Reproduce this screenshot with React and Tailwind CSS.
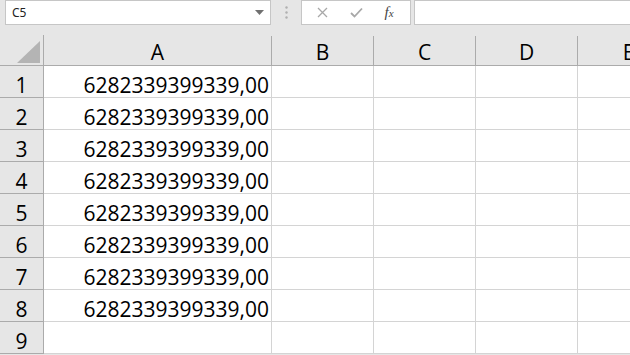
import React from "react";

const cols = ["A", "B", "C", "D", "E"];
const rows = [1, 2, 3, 4, 5, 6, 7, 8, 9];
const value = "6282339399339,00";

export default function App() {
  return (
    <div
      className="w-[630px] h-[355px] overflow-hidden bg-[#e6e6e6]"
      style={{ fontFamily: '"Open Sans", "Noto Sans", sans-serif' }}
    >
      {/* Formula bar */}
      <div className="flex items-start h-[35px]">
        <div className="ml-[5px] w-[266px] h-[25px] bg-white border border-[#c6c6c6] flex items-center justify-between pl-[6px] pr-[6px]">
          <span className="text-[12px] text-[#222]" style={{ fontFamily: '"Noto Sans", sans-serif' }}>
            C5
          </span>
          <svg width="9" height="5" viewBox="0 0 9 5">
            <polygon points="0,0 9,0 4.5,5" fill="#707070" />
          </svg>
        </div>
        <div className="w-[30px] h-[25px] flex items-center justify-center">
          <svg width="3" height="13" viewBox="0 0 3 13">
            <circle cx="1.5" cy="1.5" r="1.2" fill="#b0b0b0" />
            <circle cx="1.5" cy="6.5" r="1.2" fill="#b0b0b0" />
            <circle cx="1.5" cy="11.5" r="1.2" fill="#b0b0b0" />
          </svg>
        </div>
        <div className="w-[110px] h-[25px] bg-white border border-[#c6c6c6] flex items-center">
          <div className="w-[36px] flex justify-center pl-[4px]">
            <svg width="11" height="11" viewBox="0 0 11 11">
              <path d="M1 1 L10 10 M10 1 L1 10" stroke="#a8a8a8" strokeWidth="1.3" />
            </svg>
          </div>
          <div className="w-[36px] flex justify-center">
            <svg width="13" height="11" viewBox="0 0 13 11">
              <path d="M1 6 L4.5 9.5 L12 1.5" stroke="#a8a8a8" strokeWidth="1.8" fill="none" />
            </svg>
          </div>
          <div className="w-[30px] flex justify-center">
            <span
              className="text-[15px] italic text-[#444] leading-none"
              style={{ fontFamily: '"Liberation Serif", serif' }}
            >
              f<span className="text-[11px]">x</span>
            </span>
          </div>
        </div>
        <div className="ml-[3px] flex-1 h-[25px] bg-white border border-[#c6c6c6] border-r-0" />
      </div>

      {/* Sheet grid */}
      <div className="grid grid-cols-[44px_228px_102px_102px_102px_102px] auto-rows-[32px] grid-rows-[31px] text-[21px] text-black">
        <div className="bg-[#e6e6e6] border-r border-b border-[#ababab] relative">
          <svg className="absolute left-[17px] top-[6px]" width="23" height="22" viewBox="0 0 23 22">
            <polygon points="23,0 23,22 0,22" fill="#b4b4b4" />
          </svg>
        </div>
        {cols.map((c) => (
          <div key={c} className="bg-[#e6e6e6] border-b border-[#ababab] flex">
            <div className="flex-1 text-center pt-[7px] leading-[21px]">{c}</div>
            <div className="w-px mt-[1px] bg-[#ababab]" />
          </div>
        ))}
        {rows.map((r) => (
          <React.Fragment key={r}>
            <div className="bg-[#e6e6e6] border-r border-b border-[#ababab] text-center pt-[9px] leading-[21px]">
              {r}
            </div>
            {cols.map((c) => (
              <div
                key={c}
                className="bg-white border-r border-b border-[#d4d4d4] text-right pr-[2px] pt-[9px] leading-[21px] whitespace-nowrap"
              >
                {c === "A" && r <= 8 ? value : ""}
              </div>
            ))}
          </React.Fragment>
        ))}
      </div>
    </div>
  );
}
